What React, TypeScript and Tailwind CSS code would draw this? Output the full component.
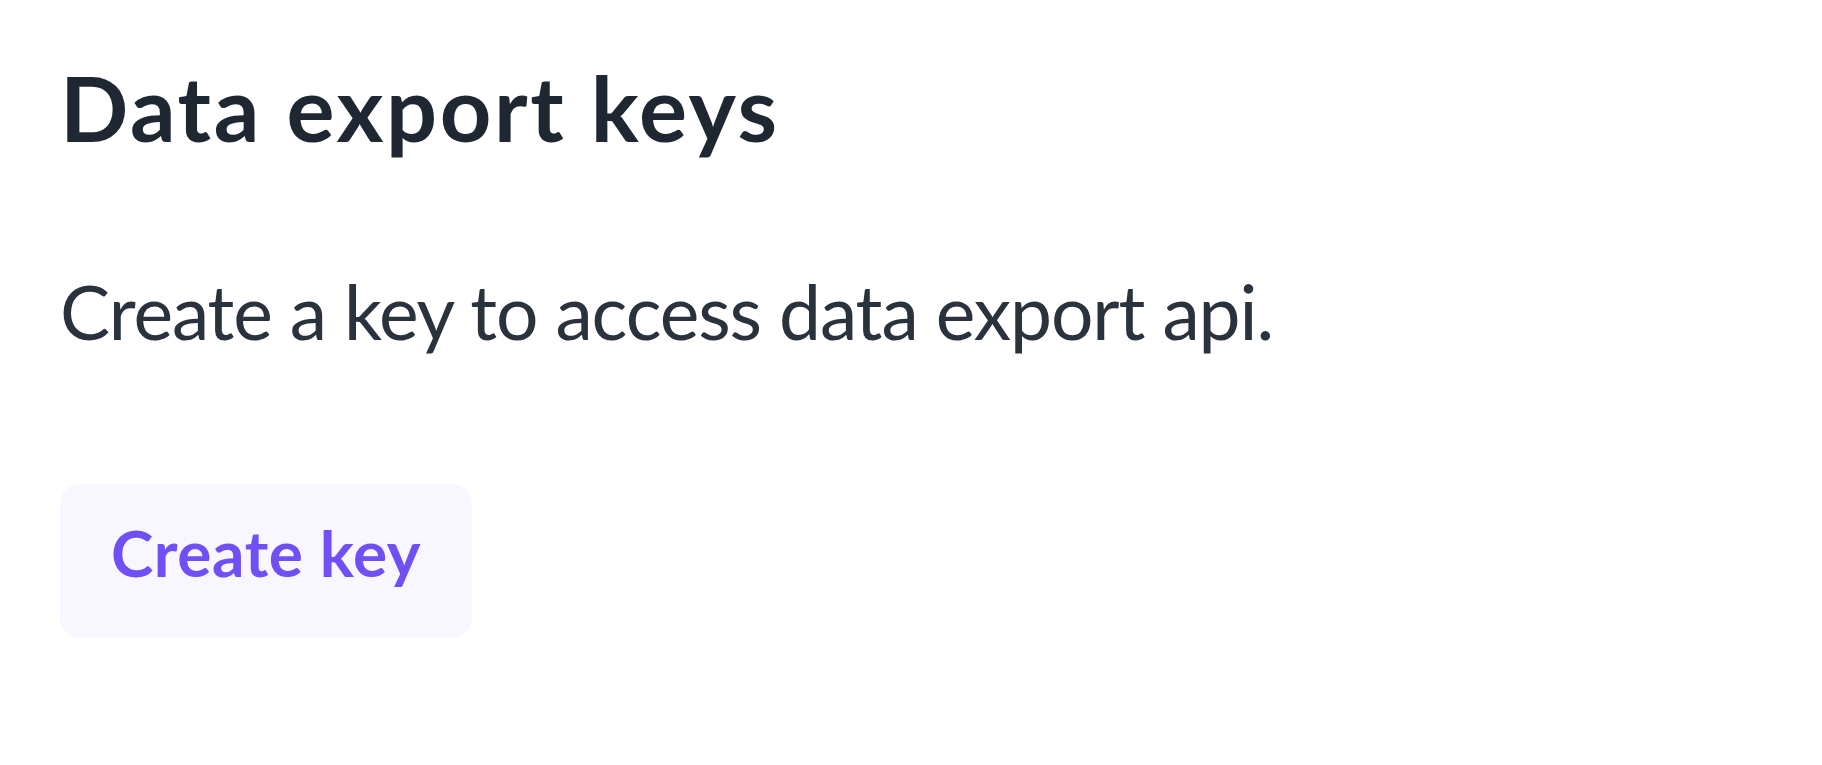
export default function App() {
  return (
    <div className="min-h-screen w-full bg-white font-['Lato',sans-serif]">
      <div className="flex flex-col items-start px-[60px] pt-[52px]">
        <h1 className="text-[90px] font-bold leading-[110px] tracking-[2.6px] text-[#1e2732]">Data export keys</h1>
        <p className="mt-[104px] text-[75px] leading-[90px] tracking-[-1.1px] text-[#2a323d]">
          Create a key to access data export api.
        </p>
        <button className="mt-[128px] h-[154px] w-[412px] rounded-[20px] bg-[#f8f7ff] pb-[16px] text-[64px] font-bold tracking-[0.6px] text-[#7050f5]">
          Create key
        </button>
      </div>
    </div>
  );
}
